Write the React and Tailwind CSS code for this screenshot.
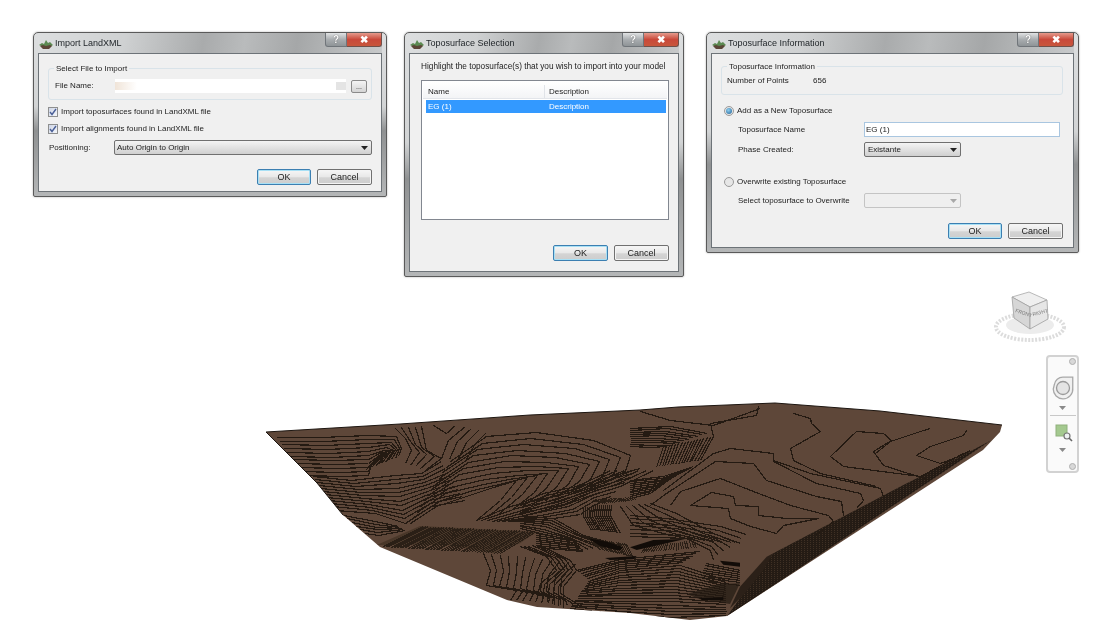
import React from "react";

// zoom crops were read at 3x, so contour guides are kept in crop coordinates
const crop = (ox, oy) => (pts) => pts.map(([x, y]) => [ox + x / 3, oy + y / 3]);
const left = crop(260, 390);
const right = crop(630, 390);
const west = crop(265, 420);
const mid = crop(520, 470);
const toPoints = (pts) => pts.map(([x, y]) => `${x.toFixed(1)},${y.toFixed(1)}`).join(" ");
// contour lines sit on pixel centres so that the flat rows stay sharp
const toPixelPoints = (pts) => pts.map(([x, y]) => `${Math.floor(x) + 0.5},${Math.floor(y) + 0.5}`).join(" ");

// n+1 lines stepping from guide a to guide b
const family = (a, b, n) => {
  const lines = [];
  for (let i = 0; i <= n; i++) {
    const t = i / n;
    lines.push(a.map((p, k) => [p[0] + (b[k][0] - p[0]) * t, p[1] + (b[k][1] - p[1]) * t]));
  }
  return lines;
};

const outline = [
  [266, 432], [400, 424], [530, 415], [640, 410], [678, 407], [775, 403], [880, 411], [1002, 425], [1000, 432], [983, 450],
  [727, 616], [690, 620], [630, 613], [537, 607], [507, 600], [380, 547], [343, 515], [317, 483],
];

const contours = [
  // top left rows
  ...family(
    west([[35, 52], [170, 52], [310, 45], [395, 50], [410, 85], [400, 110]]),
    west([[115, 165], [230, 170], [310, 165], [320, 130], [350, 100], [300, 150]]),
    10
  ),
  ...family(west([[390, 25], [420, 55], [440, 90], [420, 130]]), west([[470, 20], [485, 90], [530, 115], [480, 150]]), 4),
  ...family(west([[530, 115], [550, 60], [600, 18]]), west([[600, 125], [630, 70], [660, 40]]), 3),
  west([[505, 15], [545, 40], [570, 15]]),
  // rows down the left side to the V
  ...family(
    west([[145, 170], [260, 180], [390, 165], [470, 160], [530, 125]]),
    west([[210, 270], [330, 280], [420, 310], [500, 260], [600, 240]]),
    11
  ),
  ...family(west([[235, 285], [330, 305], [400, 320]]), west([[300, 340], [340, 345], [420, 330]]), 5),
  // centre chevrons
  ...family(
    left([[570, 215], [680, 140], [830, 128], [1000, 150], [1112, 195], [1095, 245], [1030, 280]]),
    left([[450, 400], [530, 350], [620, 320], [690, 296], [770, 270], [720, 330], [650, 390]]),
    11
  ),
  ...family(
    left([[650, 392], [750, 350], [880, 320], [1010, 270], [1140, 235]]),
    left([[760, 395], [880, 385], [960, 372], [1000, 345], [1040, 332]]),
    7
  ),
  // centre, around the dark knots
  ...family(mid([[0, 100], [70, 70], [170, 50], [240, 15], [270, 0]]), mid([[0, 140], [130, 105], [210, 75], [300, 50], [400, 0]]), 6),
  ...family(mid([[190, 110], [190, 140], [215, 180]]), mid([[275, 105], [270, 135], [300, 190]]), 14),
  ...family(mid([[300, 110], [340, 165], [430, 190], [530, 210]]), mid([[390, 100], [470, 130], [580, 190], [660, 220]]), 5),
  ...family(mid([[0, 140], [100, 145], [190, 195], [300, 225]]), mid([[0, 175], [60, 190], [130, 205], [190, 240]]), 7),
  ...family(mid([[50, 190], [170, 210]]), mid([[50, 232], [190, 245]]), 7),
  ...family(mid([[170, 300], [300, 268], [540, 245]]), mid([[210, 330], [300, 300], [480, 285]]), 6),
  ...family(mid([[210, 330], [300, 300], [480, 285], [620, 330]]), mid([[150, 415], [300, 432], [450, 442], [620, 436]]), 17),
  ...family(mid([[0, 230], [80, 260], [110, 300], [60, 340], [50, 390]]), mid([[60, 225], [150, 270], [170, 300], [130, 350], [130, 412]]), 5),
  ...family(mid([[560, 280], [660, 300]]), mid([[540, 330], [660, 345]]), 7),
  // lower left zigzags
  ...family(
    left([[670, 490], [690, 540], [680, 585], [770, 600], [750, 630]]),
    left([[950, 520], [905, 560], [900, 610], [950, 640], [960, 650]]),
    11
  ),
  // right side
  ...family(right([[250, 140], [210, 212]]), right([[100, 170], [80, 232]]), 16),
  ...family(right([[0, 115], [120, 110], [232, 130]]), right([[0, 168], [60, 172], [110, 170]]), 9),
  ...family(right([[0, 270], [100, 260], [190, 230]]), right([[0, 325], [60, 310], [130, 260]]), 10),
  ...family(
    right([[0, 375], [110, 385], [270, 410], [350, 432]]),
    right([[0, 440], [170, 445], [240, 480], [250, 510]]),
    6
  ),
  ...[
    [[180, 345], [245, 308], [310, 320], [315, 345], [385, 350], [385, 375], [470, 385], [565, 385], [460, 405], [440, 430], [360, 410], [300, 385], [295, 355], [180, 345]],
    [[120, 345], [150, 305], [270, 265], [370, 305], [480, 345], [595, 375], [610, 395], [560, 432]],
    [[60, 345], [110, 310], [255, 215], [370, 220], [410, 270], [560, 320], [635, 335], [640, 375], [650, 385]],
    [[100, 300], [250, 190], [300, 175], [430, 190], [430, 215], [560, 280], [690, 310], [700, 330], [680, 355]],
    [[480, 175], [570, 125], [545, 100], [540, 85], [490, 70]],
    [[600, 200], [680, 125], [760, 130], [785, 150], [730, 185], [760, 225], [900, 270]],
    [[430, 210], [540, 250], [750, 295], [760, 320]],
    [[480, 175], [490, 210], [570, 250], [740, 290]],
    [[600, 200], [640, 230], [870, 260], [1000, 190]],
    [[735, 190], [780, 155], [880, 120], [900, 115]],
    [[860, 195], [900, 170], [1000, 135], [1010, 120]],
    [[860, 195], [930, 220], [985, 200], [1020, 180]],
    [[250, 140], [240, 100], [380, 75], [385, 50]],
    [[30, 65], [120, 90], [250, 105], [390, 55]],
  ].map(right),
];

// tight hatching inside the dark folds
const hatches = [
  ...family(left([[370, 470], [490, 410]]), left([[720, 490], [830, 425]]), 42),
  ...family(mid([[205, 205], [240, 240]]), mid([[320, 222], [340, 262]]), 18),
  ...family(mid([[360, 250], [380, 230]]), mid([[530, 235], [520, 212]]), 22),
  ...family(mid([[220, 90], [250, 100]]), mid([[340, 82], [350, 92]]), 16),
];

const blackStreaks = [
  [[330, 232], [400, 210], [495, 207], [430, 222], [350, 240]],
  [[255, 264], [350, 258], [340, 268], [270, 270]],
  [[205, 205], [260, 215], [310, 232], [300, 242], [240, 228]],
  [[540, 384], [610, 382], [610, 390], [545, 390]],
  [[600, 272], [660, 278], [660, 290], [610, 284]],
].map(mid);

function Terrain() {
  const darkBand = left([[350, 465], [480, 408], [830, 425], [780, 460], [700, 490], [560, 465], [400, 465]]);
  const lowerPatch = mid([[500, 372], [600, 342], [660, 340], [630, 402], [540, 388]]);
  const sideBand = right([[430, 490], [820, 285], [1000, 195], [1085, 150], [290, 680], [340, 610]]);
  const strip = right([[300, 655], [330, 590], [410, 500], [430, 490], [400, 540], [345, 610]]);

  return (
    <svg className="absolute left-[260px] top-[395px]" width="750" height="230" viewBox="260 395 750 230">
      <defs>
        <clipPath id="terrain-clip">
          <polygon points={toPoints(outline)} />
        </clipPath>
        <pattern id="side-hatch" width="3" height="2" patternUnits="userSpaceOnUse">
          <rect width="3" height="2" fill="#241b14" />
          <rect width="1" height="1" fill="#3f3024" />
        </pattern>
      </defs>
      <polygon points={toPoints(outline)} fill="#5e4739" />
      <g clipPath="url(#terrain-clip)">
        <polygon points={toPoints(darkBand)} fill="#493729" />
        <polygon points={toPoints(lowerPatch)} fill="#33271d" />
        <polygon points={toPoints(sideBand)} fill="url(#side-hatch)" />
        <polygon points={toPoints(strip)} fill="#2b2018" />
        {contours.map((line, i) => (
          <polyline key={i} points={toPixelPoints(line)} fill="none" stroke="#241a12" strokeWidth="1.2" shapeRendering="crispEdges" />
        ))}
        {hatches.map((line, i) => (
          <polyline key={i} points={toPixelPoints(line)} fill="none" stroke="#2a1f16" strokeWidth="1" shapeRendering="crispEdges" />
        ))}
        {blackStreaks.map((shape, i) => (
          <polygon key={i} points={toPoints(shape)} fill="#120c08" />
        ))}
      </g>
      <polyline points={toPoints(outline.slice(0, 8))} fill="none" stroke="#1d1611" strokeWidth="1" />
      <polyline points="266,432 317,483 343,515" fill="none" stroke="#1d1611" strokeWidth="1" />
    </svg>
  );
}

function TopoIcon() {
  return (
    <svg width="14" height="10" viewBox="0 0 14 10" className="shrink-0">
      <path d="M0 6 L3 4 L5 5 L7 1 L9 4 L11 3 L14 6 L11 8 L4 8 Z" fill="#5c8a52" />
      <path d="M1 7 L4 6 L7 7 L11 6 L13 7 L10 10 L4 10 Z" fill="#5b4536" />
    </svg>
  );
}

function Dialog({ title, className, children }) {
  return (
    <div
      className={`absolute flex flex-col rounded-t-[5px] rounded-b-[2px] border border-[#5a5a5a] bg-[linear-gradient(180deg,#dcdedf_0%,#d2d4d5_45%,#8f9192_60%,#b4b6b7_100%)] px-[4px] pb-[4px] shadow-[0_0_2px_rgba(0,0,0,0.35)] blur-[0.3px] ${className}`}
    >
      <div className="flex h-[20px] shrink-0 items-start justify-between bg-[linear-gradient(100deg,#dcdedf_0%,#cfd1d2_25%,#a9abac_48%,#b9bbbc_60%,#a5a7a8_75%,#c8cacb_100%)]">
        <div className="flex h-[21px] items-center gap-[2px] pl-[1px] text-[9px] text-[#1d2226]">
          <TopoIcon />
          <span>{title}</span>
        </div>
        <div className="flex">
          <div className="flex h-[14px] w-[22px] items-center justify-center rounded-bl-[3px] border border-t-0 border-[#70757a] bg-[linear-gradient(180deg,#e0e2e3,#a9adb0_50%,#8f9497)] text-[10px] leading-none font-bold text-white [text-shadow:0_0_1px_#333]">
            ?
          </div>
          <div className="flex h-[14px] w-[35px] items-center justify-center rounded-br-[3px] border border-t-0 border-l-0 border-[#70504a] bg-[linear-gradient(180deg,#e59a8c,#c9493a_50%,#c8563c)] text-[10px] leading-none font-bold text-white">
            ✖
          </div>
        </div>
      </div>
      <div className="relative flex-1 border border-[#6d7378] bg-[#f0f0f0] text-[8px] leading-none text-[#222]">{children}</div>
    </div>
  );
}

function Button({ children, primary, className = "" }) {
  return (
    <div
      className={`flex h-[16px] items-center justify-center rounded-[2px] border bg-[linear-gradient(180deg,#f6f6f6_0%,#e8e8e8_50%,#d4d4d4_55%,#cdcdcd_100%)] text-[9px] text-[#222] ${
        primary ? "border-[#3c7fb1] shadow-[inset_0_0_0_1px_#a8e0f5]" : "border-[#707070] shadow-[inset_0_0_0_1px_#f4f4f4]"
      } ${className}`}
    >
      {children}
    </div>
  );
}

function Arrow({ color = "#222" }) {
  return (
    <svg width="7" height="4" viewBox="0 0 7 4" className="shrink-0">
      <path d="M0 0 H7 L3.5 4 Z" fill={color} />
    </svg>
  );
}

function Checkbox() {
  return (
    <div className="flex h-[10px] w-[10px] shrink-0 items-center justify-center border border-[#8e8f8f] bg-[linear-gradient(135deg,#cfd6e6,#f4f6fa)]">
      <svg width="8" height="8" viewBox="0 0 8 8">
        <path d="M1 4 L3 6.5 L7 1" fill="none" stroke="#4a5f97" strokeWidth="1.4" />
      </svg>
    </div>
  );
}

function Radio({ checked }) {
  return (
    <div className="flex h-[10px] w-[10px] shrink-0 items-center justify-center rounded-full border border-[#9a9a9a] bg-[#e6e6e6]">
      {checked && <div className="h-[6px] w-[6px] rounded-full bg-[radial-gradient(circle_at_40%_35%,#8fd0f0,#1f5f95)]" />}
    </div>
  );
}

function GroupBox({ legend, className, children }) {
  return (
    <div className={`relative rounded-[3px] border border-[#d9e3e9] ${className}`}>
      <span className="absolute -top-[4px] left-[5px] bg-[#f0f0f0] px-[2px]">{legend}</span>
      {children}
    </div>
  );
}

function ImportDialog() {
  return (
    <Dialog title="Import LandXML" className="left-[33px] top-[32px] h-[165px] w-[354px]">
      <div className="flex flex-col pl-[9px] pr-[9px] pt-[14px]">
        <GroupBox legend="Select File to Import" className="flex h-[32px] items-center pl-[6px] pt-[4px]">
          <span className="w-[60px]">File Name:</span>
          <div className="flex h-[14px] w-[231px] items-center justify-between bg-white">
            <div className="h-[8px] w-[22px] bg-[linear-gradient(90deg,#f0e4d8,#ffffff)]" />
            <div className="h-[8px] w-[10px] bg-[#e4e4e4]" />
          </div>
          <div className="ml-[5px] flex h-[13px] w-[16px] items-end justify-center rounded-[2px] border border-[#8a8a8a] bg-[linear-gradient(180deg,#f4f4f4,#d4d4d4)] pb-[2px] text-[7px]">
            ...
          </div>
        </GroupBox>
        <div className="mt-[7px] flex h-[10px] items-center gap-[3px]">
          <Checkbox />
          <span>Import toposurfaces found in LandXML file</span>
        </div>
        <div className="mt-[7px] flex h-[10px] items-center gap-[3px]">
          <Checkbox />
          <span>Import alignments found in LandXML file</span>
        </div>
        <div className="mt-[6px] flex items-center">
          <span className="w-[66px] pl-[1px] pt-[1px]">Positioning:</span>
          <div className="flex h-[15px] w-[258px] items-center justify-between rounded-[2px] border border-[#707070] bg-[linear-gradient(180deg,#f4f4f4,#e2e2e2_50%,#d0d0d0)] px-[2px] pr-[3px]">
            <span>Auto Origin to Origin</span>
            <Arrow />
          </div>
        </div>
        <div className="mt-[14px] flex justify-end gap-[6px]">
          <Button primary className="w-[54px]">OK</Button>
          <Button className="w-[55px]">Cancel</Button>
        </div>
      </div>
    </Dialog>
  );
}

function SelectionDialog() {
  return (
    <Dialog title="Toposurface Selection" className="left-[404px] top-[32px] h-[245px] w-[280px]">
      <div className="flex h-full flex-col pl-[11px] pr-[9px] pt-[9px]">
        <div className="whitespace-nowrap text-[8.25px]">Highlight the toposurface(s) that you wish to import into your model</div>
        <div className="mt-[9px] flex h-[140px] flex-col border border-[#828790] bg-white p-[1px]">
          <div className="flex h-[17px] items-center border-b border-[#e2e5ea] bg-[linear-gradient(180deg,#ffffff,#f3f4f6)] pt-[3px]">
            <div className="flex h-full w-[122px] items-center border-r border-[#e0e3e8] pl-[5px]">Name</div>
            <div className="pl-[4px]">Description</div>
          </div>
          <div className="ml-[3px] mr-[1px] mt-[1px] flex h-[13px] items-center bg-[#3399ff] pt-[1px] text-white">
            <div className="w-[123px] pl-[2px]">EG (1)</div>
            <div>Description</div>
          </div>
        </div>
        <div className="mt-[25px] flex justify-end gap-[6px]">
          <Button primary className="w-[55px]">OK</Button>
          <Button className="w-[55px]">Cancel</Button>
        </div>
      </div>
    </Dialog>
  );
}

function InformationDialog() {
  return (
    <Dialog title="Toposurface Information" className="left-[706px] top-[32px] h-[221px] w-[373px]">
      <div className="flex flex-col pl-[9px] pr-[10px] pt-[12px]">
        <GroupBox legend="Toposurface Information" className="flex h-[29px] items-start pl-[5px] pt-[10px]">
          <span className="w-[86px]">Number of Points</span>
          <span>656</span>
        </GroupBox>
        <div className="mt-[11px] flex h-[10px] items-center gap-[3px] pl-[3px]">
          <Radio checked />
          <span>Add as a New Toposurface</span>
        </div>
        <div className="mt-[6px] flex h-[15px] items-center pl-[17px]">
          <span className="w-[126px]">Toposurface Name</span>
          <div className="flex h-[15px] w-[196px] items-center border border-[#a9c6e0] bg-white pl-[1px]">EG (1)</div>
        </div>
        <div className="mt-[5px] flex h-[15px] items-center pl-[17px]">
          <span className="w-[126px]">Phase Created:</span>
          <div className="flex h-[15px] w-[97px] items-center justify-between rounded-[2px] border border-[#707070] bg-[linear-gradient(180deg,#f4f4f4,#e2e2e2_50%,#d0d0d0)] pl-[3px] pr-[3px]">
            <span>Existante</span>
            <Arrow />
          </div>
        </div>
        <div className="mt-[20px] flex h-[10px] items-center gap-[3px] pl-[3px]">
          <Radio />
          <span>Overwrite existing Toposurface</span>
        </div>
        <div className="mt-[6px] flex h-[15px] items-center pl-[17px]">
          <span className="w-[126px] whitespace-nowrap">Select toposurface to Overwrite</span>
          <div className="flex h-[15px] w-[97px] items-center justify-end rounded-[2px] border border-[#c4c4c4] bg-[#efefef] pr-[3px]">
            <Arrow color="#a8a8a8" />
          </div>
        </div>
        <div className="mt-[15px] flex justify-end gap-[6px]">
          <Button primary className="w-[54px]">OK</Button>
          <Button className="w-[55px]">Cancel</Button>
        </div>
      </div>
    </Dialog>
  );
}

function ViewCube() {
  return (
    <svg className="absolute left-[985px] top-[285px] blur-[0.6px]" width="95" height="65" viewBox="985 285 95 65">
      <ellipse cx="1030" cy="325" rx="24" ry="9" fill="#ececec" />
      <ellipse cx="1030" cy="327" rx="34" ry="13" fill="none" stroke="#dcdcdc" strokeWidth="4" strokeDasharray="2 1.5" />
      <polygon points="1012,297 1029,292 1047,300 1030,307" fill="#efefef" stroke="#a8a8a8" strokeWidth="0.8" />
      <polygon points="1012,297 1030,307 1030,329 1014,318" fill="#d6d6d6" stroke="#a0a0a0" strokeWidth="0.8" />
      <polygon points="1030,307 1047,300 1048,319 1030,329" fill="#e6e6e6" stroke="#a0a0a0" strokeWidth="0.8" />
      <text x="1015" y="312" fontSize="5" fill="#777" transform="rotate(18 1015 312)" fontFamily="Liberation Sans, sans-serif">FRONT</text>
      <text x="1033" y="316" fontSize="5" fill="#777" transform="rotate(-14 1033 316)" fontFamily="Liberation Sans, sans-serif">RIGHT</text>
    </svg>
  );
}

function NavBar() {
  return (
    <div className="absolute left-[1046px] top-[355px] flex h-[118px] w-[33px] flex-col items-center rounded-[4px] border-2 border-[#d2d2d2] bg-[#fafafa] blur-[0.4px]">
      <div className="absolute right-[1px] top-[1px] h-[7px] w-[7px] rounded-full border border-[#b0b0b0] bg-[#d8d8d8]" />
      <svg width="24" height="26" viewBox="0 0 22 24" className="mt-[18px]">
        <path d="M3 9 A8 8 0 0 1 11 2 H20 V12 A9 9 0 0 1 11 22 A9 9 0 0 1 2 13 Z" fill="#f0f0f0" stroke="#a8a8a8" strokeWidth="1.2" />
        <circle cx="11" cy="12" r="6" fill="#e4e4e4" stroke="#9a9a9a" strokeWidth="1.2" />
      </svg>
      <div className="mt-[5px]">
        <Arrow color="#8a8a8a" />
      </div>
      <div className="mt-[5px] h-[1px] w-[26px] bg-[#c8c8c8]" />
      <svg width="18" height="18" viewBox="0 0 18 18" className="ml-[2px] mt-[8px]">
        <rect x="1" y="1" width="11" height="11" fill="#a4c98f" stroke="#8fb07c" />
        <circle cx="12" cy="12" r="3" fill="#eef2f2" stroke="#777" strokeWidth="1.2" />
        <path d="M14 14 L17 17" stroke="#666" strokeWidth="1.6" />
      </svg>
      <div className="mt-[6px]">
        <Arrow color="#8a8a8a" />
      </div>
      <div className="absolute bottom-[1px] right-[1px] h-[7px] w-[7px] rounded-full border border-[#b0b0b0] bg-[#d8d8d8]" />
    </div>
  );
}

export default function App() {
  return (
    <div className="relative h-[631px] w-[1104px] overflow-hidden bg-white font-['Liberation_Sans',Arial,sans-serif]">
      <ImportDialog />
      <SelectionDialog />
      <InformationDialog />
      <ViewCube />
      <NavBar />
      <Terrain />
    </div>
  );
}
